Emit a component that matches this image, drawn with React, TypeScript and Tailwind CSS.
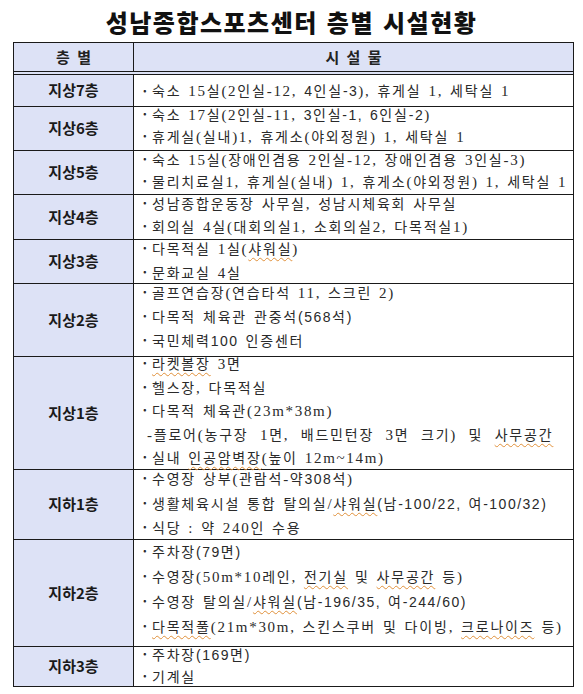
import React from "react"

type Row = {
  label: string
  h: string
  line: string
  pt: string
  lines: string[]
}

// [..] = spell-check wave, {..} = sans digits
const rows: Row[] = [
  { label: "지상7층", h: "h-[32px]", line: "h-[31px] leading-[31px]", pt: "pt-0", lines: ["숙소 15실(2인실-12, {4인실-3}), 휴게실 1, 세탁실 1"] },
  {
    label: "지상6층",
    h: "h-[44px]",
    line: "h-[22px] leading-[12px] last:h-[14px]",
    pt: "pt-[1px]",
    lines: ["숙소 17실(2인실-11, {3인실-1, 6인실-2})", "휴게실(실내)1, 휴게소(야외정원) 1, 세탁실 1"],
  },
  {
    label: "지상5층",
    h: "h-[44px]",
    line: "h-[22px] leading-[12px] last:h-[14px]",
    pt: "pt-[2px]",
    lines: ["숙소 15실(장애인겸용 2인실-12, 장애인겸용 3인실-3)", "물리치료실1, 휴게실(실내) 1, 휴게소(야외정원) 1, 세탁실 1"],
  },
  {
    label: "지상4층",
    h: "h-[45px]",
    line: "h-[23px] leading-[12px] last:h-[14px]",
    pt: "pt-[2px]",
    lines: ["성남종합운동장 사무실, 성남시체육회 사무실", "회의실 4실(대회의실1, 소회의실2, 다목적실1)"],
  },
  {
    label: "지상3층",
    h: "h-[44px]",
    line: "h-[24px] leading-[12px] last:h-[14px]",
    pt: "pt-[2px]",
    lines: ["다목적실 1실([샤워실])", "문화교실 4실"],
  },
  {
    label: "지상2층",
    h: "h-[73px]",
    line: "h-[24px] leading-[12px] last:h-[14px]",
    pt: "pt-[2px]",
    lines: ["골프연습장(연습타석 11, 스크린 2)", "다목적 체육관 관중석{(568석)}", "국민체력{100} 인증센터"],
  },
  {
    label: "지상1층",
    h: "h-[113px]",
    line: "h-[23.5px] leading-[12px] last:h-[14px]",
    pt: "pt-0",
    lines: [
      "[라켓볼장] 3면",
      "헬스장, 다목적실",
      "다목적 체육관(23m*38m)",
      "-플로어(농구장 1면, 배드민턴장 3면 크기) 및 [사무공간]",
      "실내 [인공암벽장](높이 12m~14m)",
    ],
  },
  {
    label: "지하1층",
    h: "h-[70px]",
    line: "h-[24.5px] leading-[12px] last:h-[14px]",
    pt: "pt-[2px]",
    lines: ["수영장 상부(관람석-약{308}석)", "생활체육시설 통합 탈의실/[샤워실]{(남-100/22, 여-100/32)}", "식당 : 약 240인 수용"],
  },
  {
    label: "지하2층",
    h: "h-[107px]",
    line: "h-[25px] leading-[12px] last:h-[14px]",
    pt: "pt-[5px]",
    lines: [
      "주차장{(79면)}",
      "수영장(50m*10레인, [전기실] 및 [사무공간] 등)",
      "수영장 탈의실/[샤워실]{(남-196/35, 여-244/60)}",
      "[다목적풀](21m*30m, 스킨스쿠버 및 다이빙, [크로나이즈] 등)",
    ],
  },
  {
    label: "지하3층",
    h: "h-[39px]",
    line: "h-[22px] leading-[12px] last:h-[14px]",
    pt: "pt-[1px]",
    lines: ["주차장{(169면)}", "기계실"],
  },
]

// hangul runs are drawn in Noto, the rest in a latin face
function Runs({ text, sans }: { text: string; sans?: boolean }) {
  const pieces = text.split(/([가-힣]+)/).filter(Boolean)
  return (
    <>
      {pieces.map((p, i) =>
        /[가-힣]/.test(p) ? (
          <span key={i} className="text-[14px] tracking-[1.8px]">
            {p}
          </span>
        ) : sans ? (
          <span key={i} className="font-['Liberation_Sans',sans-serif] text-[14px] tracking-[1.5px]">
            {p}
          </span>
        ) : (
          <span key={i} className="font-['Liberation_Serif',serif] text-[15px] tracking-[1.7px]">
            {p}
          </span>
        )
      )}
    </>
  )
}

function Segments({ text }: { text: string }) {
  const parts = text.split(/(\[[^\]]+\]|\{[^}]+\})/).filter(Boolean)
  return (
    <>
      {parts.map((p, i) => {
        if (p.startsWith("[")) {
          return (
            <span
              key={i}
              className="underline decoration-wavy decoration-[#e0903a] decoration-1 underline-offset-[3px]"
            >
              <Runs text={p.slice(1, -1)} />
            </span>
          )
        }
        if (p.startsWith("{")) {
          return <Runs key={i} text={p.slice(1, -1)} sans />
        }
        return <Runs key={i} text={p} />
      })}
    </>
  )
}

function Line({ text, cls }: { text: string; cls: string }) {
  // sub item ("-플로어...") has no bullet and is spread a bit wider
  if (text.startsWith("-")) {
    return (
      <div className={`${cls} whitespace-nowrap pl-[13px] [word-spacing:6px]`}>
        <Segments text={text} />
      </div>
    )
  }
  return (
    <div className={`${cls} flex whitespace-nowrap`}>
      <span className="w-[18px] shrink-0 pl-[7px] text-[13px] font-bold">·</span>
      <span>
        <Segments text={text} />
      </span>
    </div>
  )
}

export default function App() {
  return (
    <div className="w-[583px] h-[694px] bg-white font-['Noto_Sans_CJK_KR',sans-serif] text-[#222]">
      <h1 className="h-[42px] pt-[5px] text-center text-[24px] leading-[34px] font-black tracking-[1.5px] [word-spacing:2px] text-[#111]">
        성남종합스포츠센터 층별 시설현황
      </h1>

      <div className="ml-[13px] w-[561px] border border-[#1a1a1a]">
        {/* header */}
        <div className="flex h-[32px] border-b-4 border-double border-[#1a1a1a] bg-[#dde2f6] text-[15px] font-bold [word-spacing:4px]">
          <div className="flex w-[120px] items-center justify-center border-r border-[#1a1a1a]">층 별</div>
          <div className="flex flex-1 items-center justify-center">시 설 물</div>
        </div>

        {rows.map((row, idx) => (
          <div
            key={row.label}
            className={`flex ${row.h} ${idx < rows.length - 1 ? "border-b border-[#1a1a1a]" : ""}`}
          >
            <div className="flex w-[120px] shrink-0 items-center justify-center border-r border-[#1a1a1a] bg-[#dde2f6] text-[15px] font-bold text-[#1a1a1a]">
              {row.label}
            </div>
            <div
              className={`min-w-0 flex-1 text-[14px] text-[#2a2a2a] [word-spacing:1.5px] ${
                row.lines.length === 1 ? "flex items-center" : row.pt
              }`}
            >
              <div>
                {row.lines.map((l) => (
                  <Line key={l} text={l} cls={row.line} />
                ))}
              </div>
            </div>
          </div>
        ))}
      </div>
    </div>
  )
}
